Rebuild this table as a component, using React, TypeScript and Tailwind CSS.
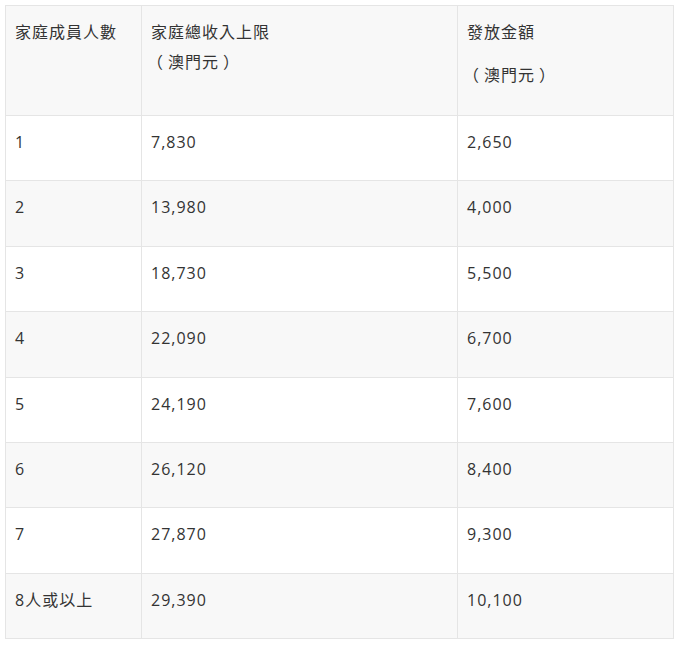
import React from 'react';

const rows: [string, string, string][] = [
  ['1', '7,830', '2,650'],
  ['2', '13,980', '4,000'],
  ['3', '18,730', '5,500'],
  ['4', '22,090', '6,700'],
  ['5', '24,190', '7,600'],
  ['6', '26,120', '8,400'],
  ['7', '27,870', '9,300'],
  ['8人或以上', '29,390', '10,100'],
];

const cell = 'border border-[#e5e5e5] align-top px-[9px] pt-[11px] text-left font-normal';

// full-width parens sit centred in their box in the original font
const Unit = () => (
  <>
    <span className="relative -left-[4px]">（</span>澳門元<span className="relative left-[4px]">）</span>
  </>
);

const App: React.FC = () => {
  return (
    <div className="min-h-screen bg-white p-[5px]">
      <table
        className="border-collapse table-fixed w-[668px] text-[16px] leading-[30px] tracking-[1px] text-[#333]"
        style={{ fontFamily: '"Open Sans", "Noto Sans CJK TC", sans-serif' }}
      >
        <colgroup>
          <col className="w-[136px]" />
          <col className="w-[316px]" />
          <col className="w-[216px]" />
        </colgroup>
        <thead>
          <tr className="h-[110px] bg-[#f8f8f8]">
            <th className={cell}>家庭成員人數</th>
            <th className={cell}>
              家庭總收入上限
              <br />
              <Unit />
            </th>
            <th className={cell}>
              <p>發放金額</p>
              <p className="mt-[13px]">
                <Unit />
              </p>
            </th>
          </tr>
        </thead>
        <tbody>
          {rows.map((r, i) => (
            <tr key={r[0]} className={`h-[65.4px] ${i % 2 === 1 ? 'bg-[#f8f8f8]' : 'bg-white'}`}>
              <td className={cell}>{r[0]}</td>
              <td className={cell}>{r[1]}</td>
              <td className={cell}>{r[2]}</td>
            </tr>
          ))}
        </tbody>
      </table>
    </div>
  );
};

export default App;
